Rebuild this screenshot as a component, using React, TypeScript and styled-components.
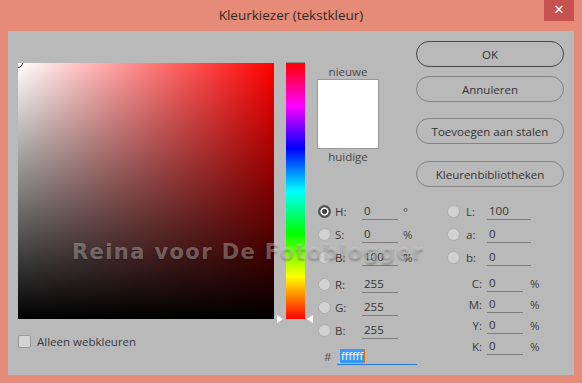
import React from 'react';
import styled, { createGlobalStyle } from 'styled-components';

const GlobalStyle = createGlobalStyle`
    html, body {
        margin: 0;
        padding: 0;
    }
    body {
        background: #E58B78;
        font-family: "Open Sans", "Noto Sans", sans-serif;
        color: #3a3838;
    }
`;

const Window = styled.div`
    width: 582px;
    height: 383px;
    display: flex;
    flex-direction: column;
    background: #E58B78;
`;

const TitleBar = styled.div`
    height: 31px;
    display: grid;
    grid-template-columns: 1fr auto 1fr;
    flex-shrink: 0;
`;

const Title = styled.div`
    grid-column: 2;
    font-size: 13.5px;
    line-height: 31px;
    color: #2e2a2a;
`;

const CloseButton = styled.div`
    grid-column: 3;
    justify-self: end;
    align-self: start;
    margin-right: 8px;
    width: 30px;
    height: 21px;
    background: #C75050;
    color: #fff;
    font-size: 13px;
    font-weight: 700;
    line-height: 20px;
    text-align: center;
    font-family: "DejaVu Sans", sans-serif;
`;

const Body = styled.div`
    flex: 1;
    margin: 0 8px 8px 8px;
    background: #B9B9B9;
    position: relative;
    display: flex;
    padding: 10px 0 0 10px;
    overflow: hidden;
`;

const LeftCol = styled.div`
    margin-top: 22px;
    display: flex;
    flex-direction: column;
`;

const ColorField = styled.div`
    width: 256px;
    height: 256px;
    position: relative;
    overflow: hidden;
    background: linear-gradient(to top, #000, rgba(0, 0, 0, 0)), linear-gradient(to right, #fff, #f00);
`;

const FieldMarker = styled.div`
    position: absolute;
    left: -5px;
    top: -5px;
    width: 8px;
    height: 8px;
    border: 1.5px solid #151515;
    border-radius: 50%;
`;

const CheckRow = styled.div`
    margin-top: 15px;
    display: flex;
    align-items: center;
    gap: 6px;
    font-size: 11.5px;
`;

const Checkbox = styled.div`
    width: 11px;
    height: 11px;
    border: 1px solid #9a9a9a;
    border-radius: 2px;
    background: #d4d4d4;
`;

const HueCol = styled.div`
    margin-left: 12px;
    margin-top: 21px;
    position: relative;
    height: 257px;
`;

const HueBar = styled.div`
    width: 19px;
    height: 256px;
    border-top: 1px solid #8c8c8c;
    background: linear-gradient(to bottom, #f00 0%, #f0f 16.67%, #00f 33.33%, #0ff 50%, #0f0 66.67%, #ff0 83.33%, #f00 100%);
`;

const Arrow = styled.div<{ $side: 'left' | 'right' }>`
    position: absolute;
    bottom: -4px;
    width: 0;
    height: 0;
    border-top: 4px solid transparent;
    border-bottom: 4px solid transparent;
    ${p => p.$side === 'left'
        ? 'left: -9px; border-left: 6px solid #fff;'
        : 'left: 21px; border-right: 6px solid #fff;'}
`;

const RightArea = styled.div`
    margin-left: 12px;
    display: flex;
    flex-direction: column;
`;

const TopRow = styled.div`
    display: flex;
`;

const SwatchCol = styled.div`
    width: 62px;
    margin-top: 24px;
    display: flex;
    flex-direction: column;
    align-items: center;
`;

const SwatchLabel = styled.div`
    font-size: 11.5px;
    line-height: 14px;
    color: #4a4848;
`;

const Swatch = styled.div`
    width: 60px;
    height: 68px;
    border: 1px solid #9a9a9a;
    background: #fff;
    margin-bottom: 1px;
`;

const ButtonCol = styled.div`
    margin-left: 37px;
    display: flex;
    flex-direction: column;
`;

const Button = styled.div<{ $primary?: boolean; $gap?: number }>`
    width: 146px;
    height: 24px;
    margin-top: ${p => p.$gap ?? 0}px;
    border: 1px solid ${p => (p.$primary ? '#474545' : '#858383')};
    border-radius: 13px;
    display: flex;
    align-items: center;
    justify-content: center;
    font-size: 11.5px;
    color: #333;
`;

const Fields = styled.div`
    margin-top: 13px;
    padding-left: 1px;
    display: flex;
`;

const FieldGroup = styled.div<{ $width: number }>`
    width: ${p => p.$width}px;
    display: flex;
    flex-direction: column;
`;

const Block = styled.div<{ $gap?: number }>`
    margin-top: ${p => p.$gap ?? 0}px;
    display: flex;
    flex-direction: column;
`;

const Row = styled.div<{ $h: number }>`
    height: ${p => p.$h}px;
    display: flex;
    align-items: center;
    font-size: 11.5px;
`;

const Radio = styled.div<{ $on?: boolean }>`
    width: 13px;
    height: 13px;
    border-radius: 50%;
    flex-shrink: 0;
    box-sizing: border-box;
    ${p => p.$on
        ? 'background: radial-gradient(circle, #444 0 2.2px, #fafafa 2.8px 3.8px, #555 4.4px);'
        : 'background: #d2d2d2; border: 1px solid #adadad;'}
`;

const Label = styled.div<{ $w: number; $ml: number; $right?: boolean }>`
    width: ${p => p.$w}px;
    margin-left: ${p => p.$ml}px;
    text-align: ${p => (p.$right ? 'right' : 'left')};
    color: #3a3838;
`;

const Value = styled.div<{ $w: number; $ml?: number }>`
    width: ${p => p.$w - 2}px;
    height: 16px;
    margin-left: ${p => p.$ml ?? 0}px;
    line-height: 16px;
    padding-left: 2px;
    border-bottom: 1px solid #7d7b7b;
    color: #333;
`;

const Unit = styled.div<{ $ml: number }>`
    margin-left: ${p => p.$ml}px;
    color: #444;
`;

const Hash = styled.div`
    width: 13px;
    margin-left: 6px;
    color: #555;
`;

const HexInput = styled.div`
    width: 77px;
    height: 16px;
    padding-left: 3px;
    border-bottom: 1px solid #2a78dc;
    display: flex;
    align-items: center;
`;

const Selection = styled.span`
    background: #3399ff;
    color: #fff;
    font-size: 11px;
    line-height: 14px;
    padding: 0 1px;
    border-right: 1px solid #e07000;
`;

const Watermark = styled.div`
    position: absolute;
    left: 64px;
    top: 209px;
    font-family: "DejaVu Sans", sans-serif;
    font-weight: 700;
    font-size: 21px;
    letter-spacing: 1.4px;
    color: rgba(210, 210, 210, 0.4);
    text-shadow: 0 2px 2px rgba(0, 0, 0, 0.22);
    pointer-events: none;
    white-space: nowrap;
`;

const hsb = [
    { k: 'H:', v: '0', u: '°', on: true },
    { k: 'S:', v: '0', u: '%' },
    { k: 'B:', v: '100', u: '%' },
];
const rgb = [
    { k: 'R:', v: '255' },
    { k: 'G:', v: '255' },
    { k: 'B:', v: '255' },
];
const lab = [
    { k: 'L:', v: '100' },
    { k: 'a:', v: '0' },
    { k: 'b:', v: '0' },
];
const cmyk = ['C:', 'M:', 'Y:', 'K:'];

const App: React.FC = () => {
    return (
        <Window>
            <GlobalStyle />
            <TitleBar>
                <Title>Kleurkiezer (tekstkleur)</Title>
                <CloseButton>✕</CloseButton>
            </TitleBar>
            <Body>
                <LeftCol>
                    <ColorField><FieldMarker /></ColorField>
                    <CheckRow><Checkbox />Alleen webkleuren</CheckRow>
                </LeftCol>
                <HueCol>
                    <HueBar />
                    <Arrow $side="left" />
                    <Arrow $side="right" />
                </HueCol>
                <RightArea>
                    <TopRow>
                        <SwatchCol>
                            <SwatchLabel>nieuwe</SwatchLabel>
                            <Swatch />
                            <SwatchLabel>huidige</SwatchLabel>
                        </SwatchCol>
                        <ButtonCol>
                            <Button $primary>OK</Button>
                            <Button $gap={9}>Annuleren</Button>
                            <Button $gap={16}>Toevoegen aan stalen</Button>
                            <Button $gap={17}>Kleurenbibliotheken</Button>
                        </ButtonCol>
                    </TopRow>
                    <Fields>
                        <FieldGroup $width={129}>
                            <Block>
                                {hsb.map(f => (
                                    <Row $h={23} key={f.k}>
                                        <Radio $on={f.on} />
                                        <Label $w={27} $ml={4}>{f.k}</Label>
                                        <Value $w={36}>{f.v}</Value>
                                        <Unit $ml={5}>{f.u}</Unit>
                                    </Row>
                                ))}
                            </Block>
                            <Block $gap={4}>
                                {rgb.map(f => (
                                    <Row $h={23} key={f.k}>
                                        <Radio />
                                        <Label $w={27} $ml={4}>{f.k}</Label>
                                        <Value $w={36}>{f.v}</Value>
                                    </Row>
                                ))}
                            </Block>
                            <Block $gap={3}>
                                <Row $h={23}>
                                    <Hash>#</Hash>
                                    <HexInput><Selection>ffffff</Selection></HexInput>
                                </Row>
                            </Block>
                        </FieldGroup>
                        <FieldGroup $width={110}>
                            <Block>
                                {lab.map(f => (
                                    <Row $h={23} key={f.k}>
                                        <Radio />
                                        <Label $w={21} $ml={6}>{f.k}</Label>
                                        <Value $w={44}>{f.v}</Value>
                                    </Row>
                                ))}
                            </Block>
                            <Block $gap={4}>
                                {cmyk.map(k => (
                                    <Row $h={21} key={k}>
                                        <Label $w={35} $ml={0} $right>{k}</Label>
                                        <Value $w={36} $ml={5}>0</Value>
                                        <Unit $ml={7}>%</Unit>
                                    </Row>
                                ))}
                            </Block>
                        </FieldGroup>
                    </Fields>
                </RightArea>
                <Watermark>Reina voor De Fotoblogger</Watermark>
            </Body>
        </Window>
    );
};

export default App;
